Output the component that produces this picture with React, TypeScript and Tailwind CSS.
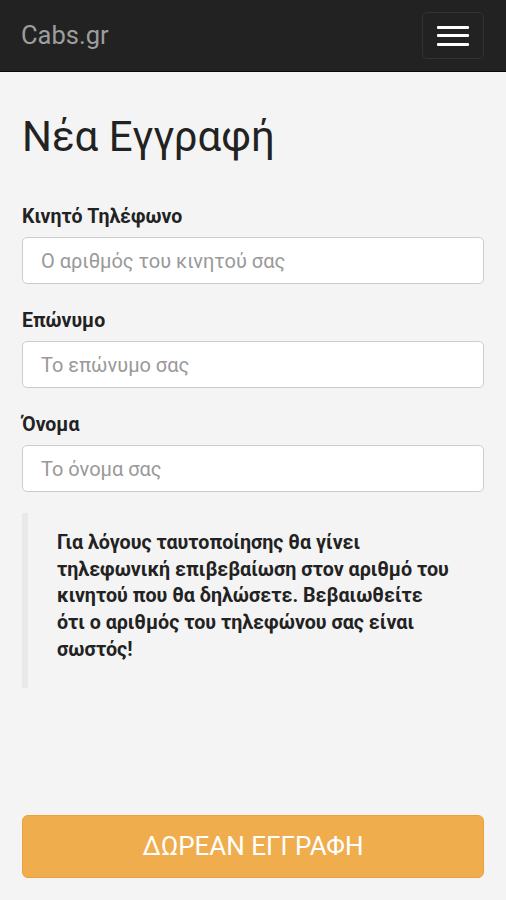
import React from "react";

const roboto = { fontFamily: "Roboto, 'Noto Sans', sans-serif" };

function Field({ label, placeholder }: { label: string; placeholder: string }) {
  return (
    <div className="flex flex-col">
      <label className="mb-[8px] text-[19.5px] font-bold leading-[24px] text-[#222]" style={roboto}>
        {label}
      </label>
      <input
        className="h-[47px] w-full rounded-[5px] border border-[#cccccc] bg-white px-[18px] text-[20px] text-[#555] placeholder:text-[#999] outline-none"
        style={roboto}
        placeholder={placeholder}
      />
    </div>
  );
}

export default function App() {
  return (
    <div className="flex h-[900px] w-full flex-col bg-[#f4f4f4]" style={roboto}>
      <nav className="flex h-[72px] shrink-0 items-center justify-between border-b border-[#080808] bg-[#222222] pl-[21px] pr-[22px]">
        <span className="text-[25.5px] leading-none text-[#9d9d9d]" style={roboto}>
          Cabs.gr
        </span>
        <button className="flex h-[47px] w-[62px] flex-col items-center justify-center gap-[5.5px] rounded-[5px] border border-[#333] bg-[#222]">
          <span className="block h-[3px] w-[32px] rounded-[1px] bg-white" />
          <span className="block h-[3px] w-[32px] rounded-[1px] bg-white" />
          <span className="block h-[3px] w-[32px] rounded-[1px] bg-white" />
        </button>
      </nav>

      <div className="flex flex-1 flex-col px-[22px] pb-[22px]">
        <h1 className="mt-[41px] text-[42px] font-normal leading-[48px] text-[#222]" style={roboto}>
          Νέα Εγγραφή
        </h1>

        <div className="mt-[44px] flex flex-col gap-[25px]">
          <Field label="Κινητό Τηλέφωνο" placeholder="Ο αριθμός του κινητού σας" />
          <Field label="Επώνυμο" placeholder="Το επώνυμο σας" />
          <Field label="Όνομα" placeholder="Το όνομα σας" />
        </div>

        <blockquote className="mt-[21px] border-l-[6px] border-[#e9e9e9] pl-[29px] pr-[20px] pt-[17px] pb-[24px]">
          <p className="text-[19.7px] font-bold leading-[26.7px] text-[#222]" style={roboto}>
            Για λόγους ταυτοποίησης θα γίνει
            <br />
            τηλεφωνική επιβεβαίωση στον αριθμό του
            <br />
            κινητού που θα δηλώσετε. Βεβαιωθείτε
            <br />
            ότι ο αριθμός του τηλεφώνου σας είναι
            <br />
            σωστός!
          </p>
        </blockquote>

        <button
          className="mt-auto h-[63px] w-full rounded-[6px] border border-[#eea236] bg-[#f0ad4e] text-[26px] text-white"
          style={roboto}
        >
          ΔΩΡΕΑΝ ΕΓΓΡΑΦΗ
        </button>
      </div>
    </div>
  );
}
